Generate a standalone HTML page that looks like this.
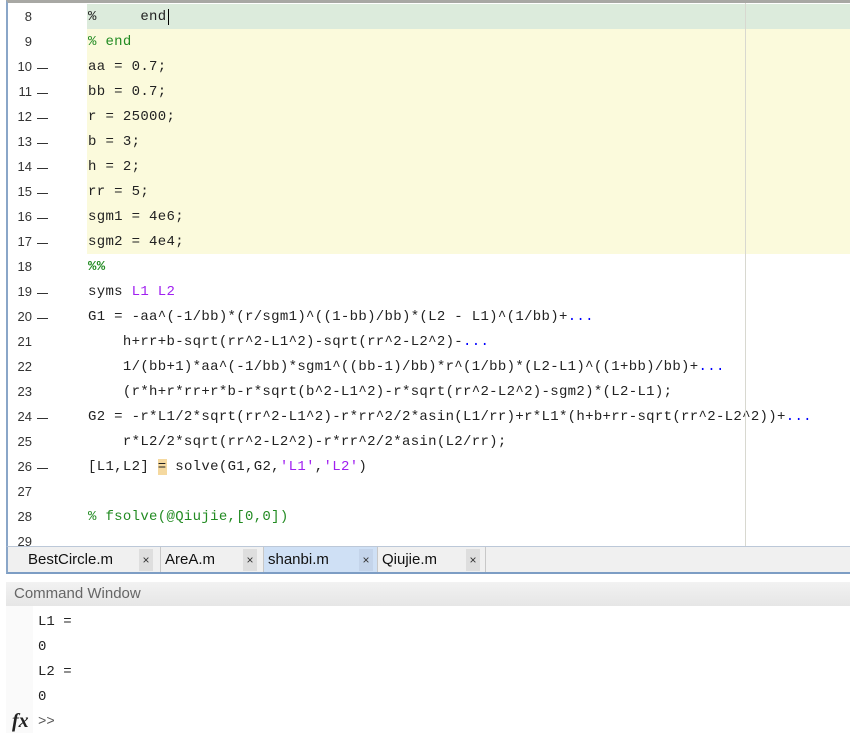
<!DOCTYPE html>
<html><head><style>
body{margin:0;width:850px;height:733px;overflow:hidden;background:#fff;font-family:"Liberation Sans",sans-serif;position:relative}
.ed{position:absolute;left:6px;top:0;width:844px;height:546px;border-left:2px solid #8aa6c8;border-top:3px solid #a8a8a4;box-sizing:border-box;overflow:hidden}
.row{position:absolute;left:0;width:842px;height:25px;font-family:"Liberation Mono",monospace;font-size:14px;letter-spacing:.32px;line-height:26px;color:#222}
.num{position:absolute;left:0;width:24px;text-align:right;font-size:13px;letter-spacing:0;font-family:"Liberation Sans",sans-serif;color:#333}
.dash{position:absolute;left:29px;width:11px;height:1px;top:14px;background:#333}
.code{position:absolute;left:79px;top:0;height:25px;right:0;padding-left:1px;white-space:pre}
.y{background:#fbfadc}
.g{background:#dcebdc}
.c{color:#228b22}
.p{color:#a020f0}
.vl{position:absolute;left:737px;top:0;width:1px;height:546px;background:#d8d8d0}
.tabs{position:absolute;left:6px;top:546px;width:844px;height:28px;background:#f0f0f0;border-left:2px solid #8aa6c8;border-bottom:2px solid #7d9dc4;border-top:1px solid #bcc8d8;box-sizing:border-box}
.tab{position:absolute;top:0;height:25px;line-height:25px;font-size:15px;color:#111;border-right:1px solid #c8c8c8;box-sizing:border-box;padding-left:20px}
.x{position:absolute;top:2px;width:14px;height:22px;background:#dedede;font-size:12px;text-align:center;line-height:22px;color:#333}
.cmdh{position:absolute;left:6px;top:582px;width:844px;height:24px;background:linear-gradient(#f2f2f2,#e6e6e6);font-size:15px;color:#666;line-height:24px;padding-left:8px;box-sizing:border-box}
.cg{position:absolute;left:6px;top:606px;width:27px;height:127px;background:#fafafa}
.out{position:absolute;left:38px;font-family:"Liberation Mono",monospace;font-size:14px;color:#222}
</style></head><body>
<div class="ed">
<div class="row" style="top:1px"><span class="num">8</span><div class="code g">%     end<span style="border-left:1px solid #000;margin-left:1px"></span></div></div>
<div class="row" style="top:26px"><span class="num">9</span><div class="code y"><span class="c">% end</span></div></div>
<div class="row" style="top:51px"><span class="num">10</span><span class="dash"></span><div class="code y">aa = 0.7;</div></div>
<div class="row" style="top:76px"><span class="num">11</span><span class="dash"></span><div class="code y">bb = 0.7;</div></div>
<div class="row" style="top:101px"><span class="num">12</span><span class="dash"></span><div class="code y">r = 25000;</div></div>
<div class="row" style="top:126px"><span class="num">13</span><span class="dash"></span><div class="code y">b = 3;</div></div>
<div class="row" style="top:151px"><span class="num">14</span><span class="dash"></span><div class="code y">h = 2;</div></div>
<div class="row" style="top:176px"><span class="num">15</span><span class="dash"></span><div class="code y">rr = 5;</div></div>
<div class="row" style="top:201px"><span class="num">16</span><span class="dash"></span><div class="code y">sgm1 = 4e6;</div></div>
<div class="row" style="top:226px"><span class="num">17</span><span class="dash"></span><div class="code y">sgm2 = 4e4;</div></div>
<div class="row" style="top:251px"><span class="num">18</span><div class="code"><b class="c">%%</b></div></div>
<div class="row" style="top:276px"><span class="num">19</span><span class="dash"></span><div class="code">syms <span class="p">L1 L2</span></div></div>
<div class="row" style="top:301px"><span class="num">20</span><span class="dash"></span><div class="code">G1 = -aa^(-1/bb)*(r/sgm1)^((1-bb)/bb)*(L2 - L1)^(1/bb)+<span style="color:#00f">...</span></div></div>
<div class="row" style="top:326px"><span class="num">21</span><div class="code">    h+rr+b-sqrt(rr^2-L1^2)-sqrt(rr^2-L2^2)-<span style="color:#00f">...</span></div></div>
<div class="row" style="top:351px"><span class="num">22</span><div class="code">    1/(bb+1)*aa^(-1/bb)*sgm1^((bb-1)/bb)*r^(1/bb)*(L2-L1)^((1+bb)/bb)+<span style="color:#00f">...</span></div></div>
<div class="row" style="top:376px"><span class="num">23</span><div class="code">    (r*h+r*rr+r*b-r*sqrt(b^2-L1^2)-r*sqrt(rr^2-L2^2)-sgm2)*(L2-L1);</div></div>
<div class="row" style="top:401px"><span class="num">24</span><span class="dash"></span><div class="code">G2 = -r*L1/2*sqrt(rr^2-L1^2)-r*rr^2/2*asin(L1/rr)+r*L1*(h+b+rr-sqrt(rr^2-L2^2))+<span style="color:#00f">...</span></div></div>
<div class="row" style="top:426px"><span class="num">25</span><div class="code">    r*L2/2*sqrt(rr^2-L2^2)-r*rr^2/2*asin(L2/rr);</div></div>
<div class="row" style="top:451px"><span class="num">26</span><span class="dash"></span><div class="code">[L1,L2] <span style="background:#f5d9a0">=</span> solve(G1,G2,<span class="p">'L1'</span>,<span class="p">'L2'</span>)</div></div>
<div class="row" style="top:476px"><span class="num">27</span><div class="code"></div></div>
<div class="row" style="top:501px"><span class="num">28</span><div class="code"><span class="c">% fsolve(@Qiujie,[0,0])</span></div></div>
<div class="row" style="top:526px"><span class="num">29</span><div class="code"></div></div>
<div class="vl"></div>
</div>
<div class="tabs">
<div class="tab" style="left:0;width:153px">BestCircle.m<span class="x" style="left:131px">×</span></div>
<div class="tab" style="left:153px;width:103px;padding-left:4px">AreA.m<span class="x" style="left:82px">×</span></div>
<div class="tab" style="left:256px;width:114px;padding-left:4px;background:#cfe0f5">shanbi.m<span class="x" style="left:95px;background:#c4d4ea">×</span></div>
<div class="tab" style="left:370px;width:108px;padding-left:4px">Qiujie.m<span class="x" style="left:88px">×</span></div>
</div>
<div class="cmdh">Command Window</div>
<div class="cg"></div>
<div class="out" style="top:614px">L1 =</div>
<div class="out" style="top:639px">0</div>
<div class="out" style="top:664px">L2 =</div>
<div class="out" style="top:689px">0</div>
<div style="position:absolute;left:12px;top:710px;font-family:'Liberation Serif',serif;font-style:italic;font-weight:bold;font-size:20px;color:#222">fx</div>
<div class="out" style="top:714px;left:38px;color:#555">&gt;&gt;</div>
</body></html>
